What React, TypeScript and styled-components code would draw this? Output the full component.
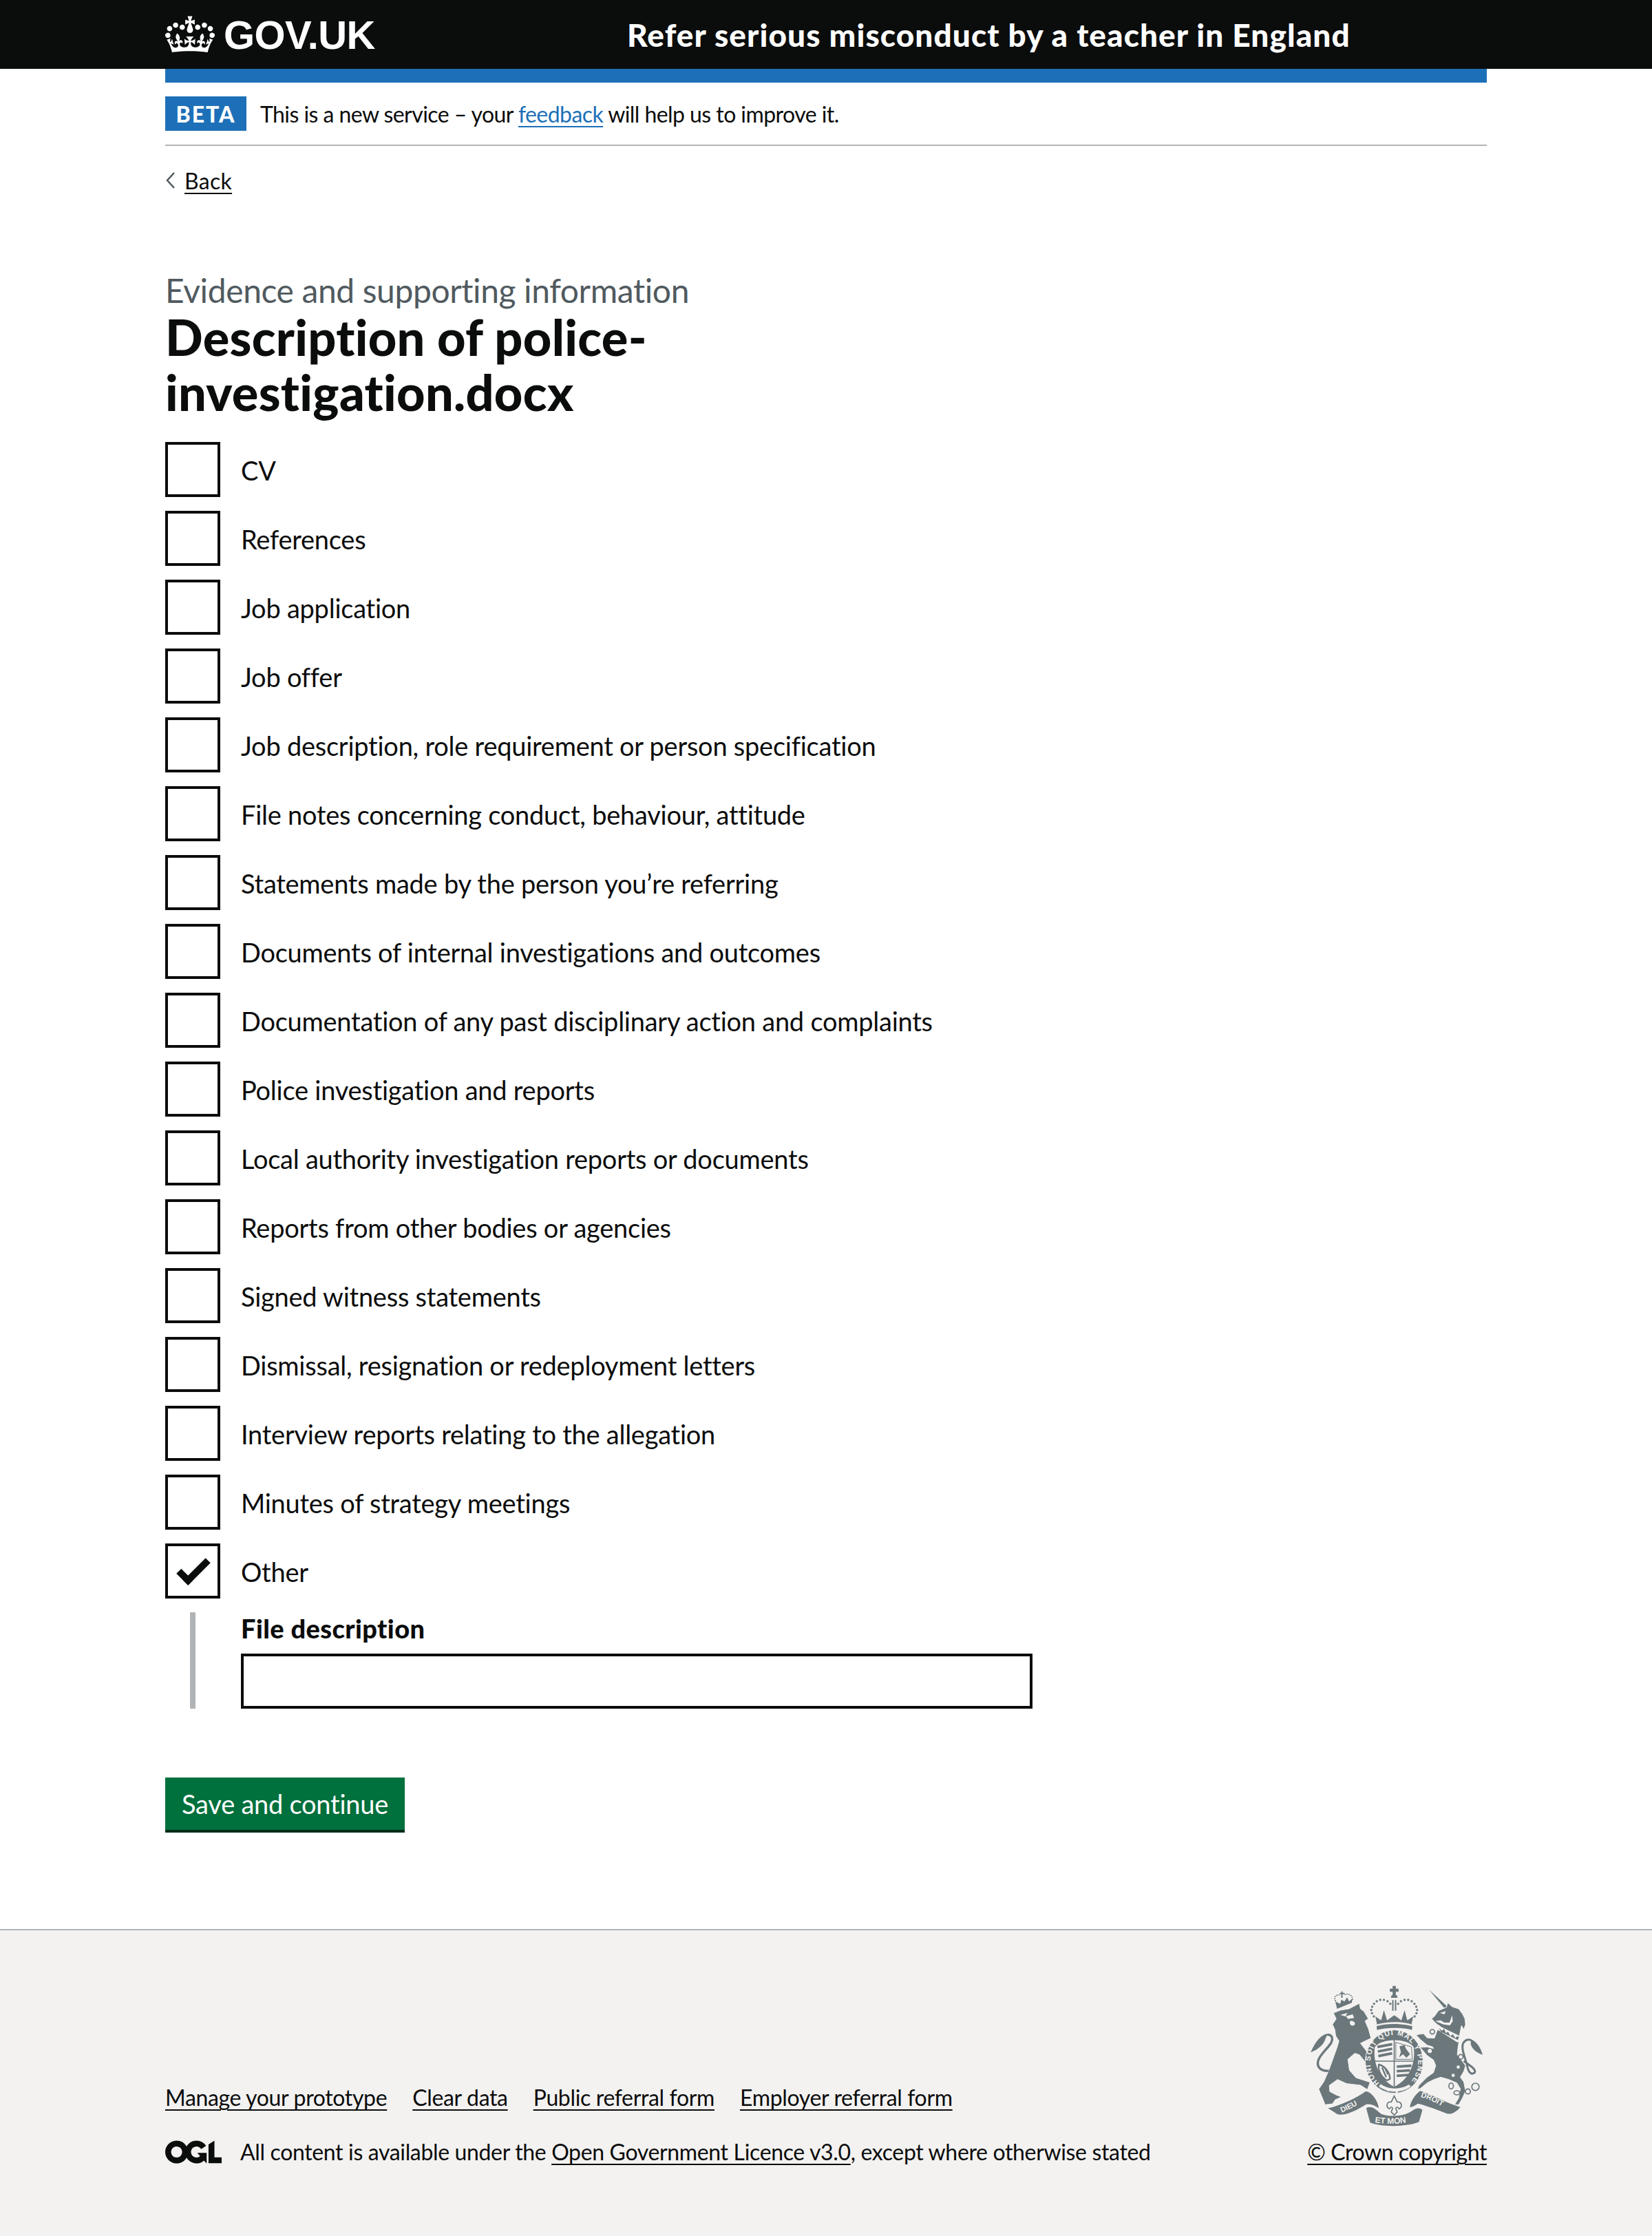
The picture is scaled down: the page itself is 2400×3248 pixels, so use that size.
import React from 'react';
import styled, { createGlobalStyle } from 'styled-components';

const GlobalStyle = createGlobalStyle`
    html, body {
        margin: 0;
        padding: 0;
        background: #fff;
    }
    body {
        font-family: "Lato", "Noto Sans", Arial, sans-serif;
        color: #0b0c0c;
    }
`;

const Page = styled.div`
    display: flex;
    flex-direction: column;
    min-height: 3248px;
`;

const Width = styled.div`
    width: 1920px;
    margin: 0 auto;
`;

const Header = styled.header`
    background: #0b0c0c;
    height: 100px;
`;

const HeaderInner = styled(Width)`
    display: flex;
    align-items: center;
    height: 100px;
`;

const Logo = styled.a`
    display: flex;
    align-items: center;
    width: 671px;
    color: #fff;
    font-family: "Liberation Sans", Arial, sans-serif;
    font-weight: 700;
    font-size: 58px;
    letter-spacing: -0.6px;
    svg {
        width: 72px;
        height: 54px;
        margin-right: 13px;
    }
`;

const ServiceName = styled.span`
    color: #fff;
    font-size: 46px;
    font-weight: 900;
    letter-spacing: 1.05px;
`;

const BlueBar = styled(Width)`
    height: 20px;
    background: #1d70b8;
`;

const PhaseBanner = styled(Width)`
    display: flex;
    align-items: center;
    padding: 20px 0;
    border-bottom: 2px solid #b1b4b6;
`;

const PhaseTag = styled.strong`
    display: flex;
    align-items: center;
    justify-content: center;
    width: 118px;
    height: 50px;
    margin-right: 20px;
    background: #1d70b8;
    color: #fff;
    font-size: 32px;
    font-weight: 900;
    letter-spacing: 2px;
`;

const PhaseText = styled.span`
    font-size: 32px;
    letter-spacing: -0.56px;
`;

const BlueLink = styled.a`
    color: #1d70b8;
    text-decoration: underline;
    text-decoration-thickness: 2px;
    text-underline-offset: 5px;
`;

const BackLink = styled.a`
    display: flex;
    align-items: center;
    height: 40px;
    margin-top: 30px;
    font-size: 32px;
    letter-spacing: 0.3px;
    span {
        text-decoration: underline;
        text-decoration-thickness: 2px;
        text-underline-offset: 5px;
    }
    svg {
        width: 16px;
        height: 28px;
        margin-right: 12px;
    }
`;

const Main = styled(Width)`
    padding-top: 110px;
    padding-bottom: 140px;
`;

const Caption = styled.div`
    font-size: 48px;
    line-height: 60px;
    color: #505a5f;
    letter-spacing: -0.4px;
`;

const Heading = styled.h1`
    width: 900px;
    margin: -3px 0 33px;
    font-size: 72px;
    line-height: 80px;
    font-weight: 900;
    letter-spacing: 0.3px;
`;

const Row = styled.label`
    display: flex;
    align-items: center;
    height: 80px;
    margin-bottom: 20px;
`;

const Box = styled.span<{ $checked?: boolean }>`
    position: relative;
    box-sizing: border-box;
    flex: 0 0 80px;
    height: 80px;
    border: 4px solid #0b0c0c;
    background: #fff;
    &::after {
        content: '';
        display: ${(p) => (p.$checked ? 'block' : 'none')};
        position: absolute;
        top: 20px;
        left: 14px;
        width: 46px;
        height: 24px;
        border: solid #0b0c0c;
        border-width: 0 0 10px 10px;
        transform: rotate(-45deg);
        box-sizing: border-box;
        border-top-color: transparent;
    }
`;

const RowText = styled.span`
    padding-left: 30px;
    padding-top: 2px;
    font-size: 38px;
    letter-spacing: -0.25px;
`;

const Conditional = styled.div`
    margin-left: 36px;
    padding-left: 66px;
    border-left: 8px solid #b1b4b6;
`;

const FieldLabel = styled.label`
    display: block;
    height: 50px;
    margin-bottom: 10px;
    font-size: 38px;
    line-height: 46px;
    font-weight: 900;
    letter-spacing: 0.4px;
`;

const TextInput = styled.input`
    display: block;
    box-sizing: border-box;
    width: 1150px;
    height: 80px;
    border: 4px solid #0b0c0c;
    border-radius: 0;
    background: #fff;
    outline: none;
`;

const SaveButton = styled.button`
    display: block;
    box-sizing: border-box;
    width: 348px;
    height: 76px;
    margin-top: 100px;
    margin-bottom: 4px;
    padding: 0;
    border: 0;
    background: #00703c;
    box-shadow: 0 4px 0 #002d18;
    color: #fff;
    font-family: inherit;
    font-size: 38px;
    letter-spacing: -0.25px;
`;

const Footer = styled.footer`
    flex: 1;
    box-sizing: border-box;
    padding-top: 80px;
    background: #f3f2f1;
    border-top: 2px solid #b1b4b6;
`;

const FooterInner = styled(Width)`
    display: flex;
    justify-content: space-between;
    align-items: flex-end;
`;

const FooterLeft = styled.div`
    display: flex;
    flex-direction: column;
`;

const FooterLinks = styled.div`
    display: flex;
    gap: 37px;
    margin-bottom: 39px;
    font-size: 32px;
    line-height: 40px;
    letter-spacing: -0.35px;
`;

const FooterLink = styled.a`
    color: #0b0c0c;
    text-decoration: underline;
    text-decoration-thickness: 2px;
    text-underline-offset: 5px;
`;

const Licence = styled.div`
    display: flex;
    align-items: center;
    font-size: 32px;
    line-height: 40px;
    letter-spacing: -0.35px;
    svg {
        width: 82px;
        height: 34px;
        margin-right: 27px;
    }
`;

const FooterRight = styled.div`
    display: flex;
    flex-direction: column;
    align-items: flex-end;
    font-size: 32px;
    line-height: 40px;
    letter-spacing: -0.45px;
    svg {
        width: 252px;
        height: 205px;
        margin-right: 5px;
        margin-bottom: 17px;
    }
`;

const labels = [
    'CV',
    'References',
    'Job application',
    'Job offer',
    'Job description, role requirement or person specification',
    'File notes concerning conduct, behaviour, attitude',
    'Statements made by the person you’re referring',
    'Documents of internal investigations and outcomes',
    'Documentation of any past disciplinary action and complaints',
    'Police investigation and reports',
    'Local authority investigation reports or documents',
    'Reports from other bodies or agencies',
    'Signed witness statements',
    'Dismissal, resignation or redeployment letters',
    'Interview reports relating to the allegation',
    'Minutes of strategy meetings',
];

const footerLinks = ['Manage your prototype', 'Clear data', 'Public referral form', 'Employer referral form'];

const CrownIcon = () => (
    <svg viewBox="0 0 132 97" aria-hidden="true">
        <path
            fill="currentColor"
            fillRule="evenodd"
            d="M25 30.2c3.5 1.5 7.7-.2 9.1-3.7 1.5-3.6-.2-7.8-3.9-9.2-3.6-1.4-7.6.3-9.1 3.9-1.4 3.5.3 7.5 3.9 9zM9 39.5c3.6 1.5 7.8-.2 9.2-3.7 1.5-3.6-.2-7.8-3.9-9.1-3.6-1.5-7.6.2-9.1 3.8-1.4 3.5.3 7.5 3.8 9zM4.4 57.2c3.5 1.5 7.7-.2 9.1-3.8 1.5-3.6-.2-7.7-3.9-9.1-3.5-1.5-7.6.3-9.1 3.8-1.4 3.5.3 7.6 3.9 9.1zm38.3-21.4c3.5 1.5 7.7-.2 9.1-3.8 1.5-3.6-.2-7.7-3.9-9.1-3.6-1.5-7.6.3-9.1 3.8-1.3 3.6.4 7.7 3.9 9.1zm64.4-5.6c-3.6 1.5-7.8-.2-9.1-3.7-1.5-3.6.2-7.8 3.8-9.2 3.6-1.4 7.7.3 9.2 3.9 1.3 3.5-.4 7.5-3.9 9zm15.9 9.3c-3.6 1.5-7.7-.2-9.1-3.7-1.5-3.6.2-7.8 3.7-9.1 3.6-1.5 7.7.2 9.2 3.8 1.5 3.5-.3 7.5-3.8 9zm4.7 17.7c-3.6 1.5-7.8-.2-9.2-3.8-1.5-3.6.2-7.7 3.9-9.1 3.6-1.5 7.7.3 9.2 3.8 1.3 3.5-.4 7.6-3.9 9.1zM89.3 35.8c-3.6 1.5-7.8-.2-9.2-3.8-1.4-3.6.2-7.7 3.9-9.1 3.6-1.5 7.7.3 9.2 3.8 1.4 3.6-.3 7.7-3.9 9.1zM69.7 17.7l8.9 4.7V9.3l-8.9 2.8c-.2-.3-.5-.6-.9-.9L72.4 0H59.6l3.5 11.2c-.3.3-.6.5-.9.9l-8.8-2.8v13.1l8.8-4.7c.3.3.6.7.9.9l-5 15.4v.1c-.2.8-.4 1.6-.4 2.4 0 4.1 3.1 7.5 7 8.1h.2c.3 0 .7.1 1 .1.4 0 .7 0 1-.1h.2c4-.6 7.1-4.1 7.1-8.1 0-.8-.1-1.7-.4-2.4V34l-5.1-15.4c.4-.2.7-.6 1-.9zM66 92.8c16.9 0 32.8 1.1 47.1 3.2 4-16.9 8.9-26.7 14-33.5l-9.6-3.4c1 4.9 1.1 7.2 0 10.2-1.5-1.4-3-4.3-4.2-8.7L108.6 76c2.8-2 5-3.2 7.5-3.3-4.4 9.4-10 11.9-13.6 11.2-4.3-.8-6.3-4.6-5.6-7.9 1-4.7 5.7-5.9 8-.5 4.3-8.7-3-11.4-7.6-8.8 7.1-7.2 7.9-13.5 2.1-21.1-8 6.1-8.1 12.3-4.5 20.8-4.7-5.4-12.1-2.5-9.5 6.2 3.4-5.2 7.9-2 7.2 3.1-.6 4.3-6.4 7.8-13.5 7.2-10.3-.9-10.9-8-11.2-13.8 2.5-.5 7.1 1.8 11 7.3L80.2 60c-4.1 4.4-8 5.3-12.3 5.4 1.4-4.4 8-11.6 8-11.6H55.5s6.4 7.2 7.9 11.6c-4.2-.1-8-1-12.3-5.4l1.4 16.4c3.9-5.5 8.5-7.7 10.9-7.3-.3 5.8-.9 12.8-11.1 13.8-7.2.6-12.9-2.9-13.5-7.2-.7-5 3.8-8.3 7.1-3.1 2.7-8.7-4.6-11.6-9.4-6.2 3.7-8.5 3.6-14.7-4.6-20.8-5.8 7.6-5 13.9 2.2 21.1-4.7-2.6-11.9.1-7.7 8.8 2.3-5.5 7.1-4.2 8.1.5.7 3.3-1.3 7.1-5.7 7.9-3.5.7-9-1.8-13.5-11.2 2.5.1 4.7 1.3 7.5 3.3l-4.7-15.4c-1.2 4.4-2.7 7.2-4.3 8.7-1.1-3-.9-5.3 0-10.2l-9.5 3.4c5 6.9 9.9 16.7 14 33.5 14.8-2.1 30.8-3.2 47.7-3.2z"
        />
    </svg>
);

const OglLogo = () => (
    <svg viewBox="0 0 483.2 195.7" aria-hidden="true">
        <path
            fill="currentColor"
            d="M421.5 142.8V.1l-50.7 32.3v161.1h112.4v-50.7zm-122.3-9.6A47.12 47.12 0 0 1 221 97.8c0-26 21.1-47.1 47.1-47.1 16.7 0 31.4 8.7 39.7 21.8l42.7-27.2A97.63 97.63 0 0 0 268.1 0c-36.5 0-68.3 20.1-85.1 49.7A98 98 0 0 0 97.8 0C43.9 0 0 43.9 0 97.8s43.9 97.8 97.8 97.8c36.5 0 68.3-20.1 85.1-49.7a97.76 97.76 0 0 0 149.6 25.4l19.4 22.2h3v-87.8h-80l24.3 27.5zM97.8 145c-26 0-47.1-21.1-47.1-47.1s21.1-47.1 47.1-47.1 47.2 21 47.2 47S123.8 145 97.8 145"
        />
    </svg>
);

// royal arms, drawn by hand; the coordinates are those of a 3x crop of the footer
const CREST = '#6b777b';
const BG = '#f3f2f1';
const crownBeads = [
    [480, 150], [468, 139], [452, 133], [436, 133], [421, 139], [409, 150], [401, 163], [397, 177], [400, 191], [408, 205],
];
const stripes = [0, 1, 2];

const Crest = () => (
    <svg viewBox="130 70 755 615" aria-hidden="true">
        <defs>
            <path id="garter" d="M432,496 A104,118 0 1 1 562,496" />
            <path id="scrollLeft" d="M268,624 Q325,600 378,566" />
            <path id="scrollMid" d="M412,668 Q495,680 582,662" />
            <path id="scrollRight" d="M612,556 Q680,575 738,622" />
        </defs>
        {/* motto scroll */}
        <path fill={CREST} d="M208,605 C240,600 320,570 372,532 C395,530 425,570 430,605 C410,592 395,585 375,588 C340,610 285,640 250,632 Z" />
        <path fill={CREST} d="M375,605 C400,590 420,615 440,630 C480,645 540,640 570,620 C590,605 605,600 620,612 L605,665 C560,685 450,690 392,668 Z" />
        <path fill={CREST} d="M565,600 C570,570 590,545 610,530 C660,545 730,585 785,600 C770,620 745,635 725,628 C680,610 625,590 600,585 C585,595 575,600 565,600 Z" />
        <path
            fill={BG}
            stroke={CREST}
            strokeWidth="5"
            d="M497,552 L510,578 C530,575 535,600 518,608 C512,598 506,598 504,606 L510,622 L497,634 L484,622 L490,606 C488,598 482,598 476,608 C459,600 464,575 484,578 Z"
        />
        <text fill={BG} fontFamily="Liberation Sans, sans-serif" fontWeight="700" fontSize="33">
            <textPath href="#scrollLeft">DIEU</textPath>
        </text>
        <text fill={BG} fontFamily="Liberation Sans, sans-serif" fontWeight="700" fontSize="36">
            <textPath href="#scrollMid">ET MON</textPath>
        </text>
        <text fill={BG} fontFamily="Liberation Sans, sans-serif" fontWeight="700" fontSize="33">
            <textPath href="#scrollRight">DROIT</textPath>
        </text>
        {/* lion */}
        <path
            fill={CREST}
            stroke={BG}
            strokeWidth="3"
            d="M232,190 L262,178 L300,172 L345,148 L350,172 L365,183 L384,215 L370,225 L385,260 L396,300 L350,322 L388,372 L408,408 L400,452 L382,440 L372,405 L345,372 L325,366 L295,392 L302,440 L330,472 L392,492 L380,524 L350,505 L290,498 L250,480 L214,506 L216,532 L245,548 L268,556 L240,568 L228,586 L196,590 L168,522 L190,490 L212,440 L248,340 L256,312 L242,290 L238,262 L228,240 L244,216 Z"
        />
        <path fill="none" stroke={CREST} strokeWidth="10" d="M212,442 C185,445 158,432 165,400 C172,370 208,345 222,320 C232,300 225,283 205,285" />
        <path fill={CREST} d="M208,280 C175,285 150,320 133,362 C165,348 190,330 198,300 Z" />
        <path fill={BG} d="M262,198 L294,190 L284,205 Z M286,204 L316,196 L322,212 L296,216 Z M304,226 C310,222 326,226 326,238 C324,248 308,248 304,238 Z" />
        {/* lion crown */}
        <path fill={CREST} d="M248,172 L312,146 L316,126 L300,140 L292,122 L280,140 L266,132 L262,150 L240,140 Z" />
        <path fill={CREST} d="M260,102 H266 V96 H272 V102 H280 V108 H272 V124 H266 V108 H260 Z" />
        <path fill="none" stroke={CREST} strokeWidth="5" strokeDasharray="5 4" d="M242,138 C228,118 252,108 262,112 M280,110 C296,104 320,112 314,136" />
        {/* royal crown */}
        <path fill={CREST} d="M490,72 H504 V84 H516 V98 H504 V112 H490 V98 H478 V84 H490 Z" />
        <path fill={CREST} d="M486,112 H508 L512,124 H482 Z M488,134 H494 V180 H488 Z M500,134 H506 V180 H500 Z" />
        {crownBeads.map(([x, y]) => (
            <React.Fragment key={x}>
                <circle cx={x} cy={y} r="5" fill={CREST} />
                <circle cx={994 - x} cy={y} r="5" fill={CREST} />
            </React.Fragment>
        ))}
        <path
            fill={CREST}
            d="M415,205 L440,222 L452,178 L466,222 L497,200 L528,222 L542,178 L554,222 L580,205 L572,240 C530,226 464,226 422,240 Z"
        />
        <path fill={CREST} d="M420,248 C465,235 530,235 576,248 L574,264 C530,252 465,252 422,264 Z" />
        {/* garter */}
        <ellipse cx="497" cy="402" rx="126" ry="138" fill={CREST} stroke={BG} strokeWidth="3" />
        <path fill={BG} d="M412,340 C440,298 555,298 582,340 C590,400 570,475 497,512 C425,475 405,400 412,340 Z" />
        <path fill="none" stroke={CREST} strokeWidth="5" d="M497,302 V512 M408,400 H586" />
        <path fill="none" stroke={CREST} strokeWidth="3" d="M504,318 L572,338 L576,392 H504 Z" />
        {stripes.map((i) => (
            <React.Fragment key={i}>
                <path fill="none" stroke={CREST} strokeWidth="11" d={`M${424 + i * 2},${338 + i * 20} L${488},${326 + i * 20}`} />
                <path fill="none" stroke={CREST} strokeWidth="11" d={`M${508},${424 + i * 20} L${572 - i * 6},${420 + i * 20}`} />
            </React.Fragment>
        ))}
        <path fill={CREST} d="M520,335 L542,330 L548,345 L566,370 L550,385 L535,370 L518,384 L526,360 Z" />
        <path fill="none" stroke={CREST} strokeWidth="7" d="M430,415 C455,420 480,450 478,478 L465,484 C440,470 425,440 430,415 Z M444,428 L462,470 M456,428 L470,458" />
        <path fill={BG} d="M430,510 C470,540 530,540 570,510 L560,502 C525,525 470,525 438,500 Z" />
        <circle cx="472" cy="526" r="6" fill={BG} />
        <circle cx="508" cy="532" r="6" fill={BG} />
        <text fill={BG} fontFamily="Liberation Sans, sans-serif" fontWeight="700" fontSize="32">
            <textPath href="#garter" textLength="540" lengthAdjust="spacing">HONI SOIT QUI MAL Y PENSE</textPath>
        </text>
        {/* unicorn */}
        <path fill={CREST} d="M648,88 L726,160 L718,172 Z" />
        <path
            fill={CREST}
            stroke={BG}
            strokeWidth="3"
            d="M660,215 L672,205 L690,180 L725,165 L730,145 L750,163 L778,172 L795,195 L805,215 L808,240 L800,262 L790,245 L782,285 L780,310 L775,340 L772,372 L790,395 L808,420 L800,445 L785,470 L800,490 L808,530 L795,560 L778,590 L760,590 L778,560 L785,520 L770,495 L735,480 L700,470 L670,480 L640,495 L610,520 L598,522 L605,505 L640,470 L668,450 L678,420 L668,395 L640,375 L610,340 L640,338 L668,345 L665,338 L640,330 L610,305 L592,285 L625,280 L640,298 L672,300 L685,265 L700,250 L685,240 L675,232 Z"
        />
        <path fill={BG} d="M696,190 L722,182 L716,196 Z M676,225 L700,222 L715,232 L738,232 L750,200 L752,226 L740,244 L712,240 Z" />
        <path fill={BG} d="M684,262 L696,248 L786,292 L780,316 L772,318 Z" />
        <path fill={CREST} d="M692,256 L700,272 L774,308 L780,294 L770,292 L764,300 L752,282 L742,292 L732,272 L722,278 L714,258 L706,268 Z" />
        <circle cx="663" cy="272" r="10" fill={BG} stroke={CREST} strokeWidth="5" />
        <circle cx="652" cy="356" r="9" fill={BG} />
        <circle cx="787" cy="381" r="10" fill={BG} stroke={CREST} strokeWidth="5" />
        <circle cx="776" cy="426" r="7" fill={BG} />
        <circle cx="754" cy="462" r="7" fill={BG} />
        <path fill="none" stroke={CREST} strokeWidth="9" d="M800,400 C830,420 860,440 845,452 C832,460 820,448 815,420 C805,380 785,340 800,318 C815,300 835,305 840,320" />
        <path fill={CREST} d="M832,305 C860,318 875,345 882,372 C855,362 838,350 830,325 Z" />
        <g fill="none" stroke={CREST} strokeWidth="5">
            <ellipse cx="745" cy="508" rx="10" ry="13" />
            <ellipse cx="770" cy="538" rx="13" ry="9" />
            <circle cx="818" cy="532" r="11" />
            <circle cx="851" cy="512" r="16" />
        </g>
    </svg>
);

const App = () => (
    <Page>
        <GlobalStyle />
        <Header>
            <HeaderInner>
                <Logo>
                    <CrownIcon />
                    GOV.UK
                </Logo>
                <ServiceName>Refer serious misconduct by a teacher in England</ServiceName>
            </HeaderInner>
        </Header>
        <BlueBar />
        <PhaseBanner>
            <PhaseTag>BETA</PhaseTag>
            <PhaseText>
                This is a new service – your <BlueLink>feedback</BlueLink> will help us to improve it.
            </PhaseText>
        </PhaseBanner>
        <Width>
            <BackLink>
                <svg viewBox="0 0 16 28" aria-hidden="true">
                    <path d="M13 3 L3 14 L13 25" fill="none" stroke="#505a5f" strokeWidth="2.5" />
                </svg>
                <span>Back</span>
            </BackLink>
        </Width>
        <Main>
            <Caption>Evidence and supporting information</Caption>
            <Heading>Description of police-investigation.docx</Heading>
            {labels.map((label) => (
                <Row key={label}>
                    <Box />
                    <RowText>{label}</RowText>
                </Row>
            ))}
            <Row>
                <Box $checked />
                <RowText>Other</RowText>
            </Row>
            <Conditional>
                <FieldLabel>File description</FieldLabel>
                <TextInput type="text" />
            </Conditional>
            <SaveButton>Save and continue</SaveButton>
        </Main>
        <Footer>
            <FooterInner>
                <FooterLeft>
                    <FooterLinks>
                        {footerLinks.map((link) => (
                            <FooterLink key={link}>{link}</FooterLink>
                        ))}
                    </FooterLinks>
                    <Licence>
                        <OglLogo />
                        <span>
                            All content is available under the <FooterLink>Open Government Licence v3.0</FooterLink>, except where otherwise stated
                        </span>
                    </Licence>
                </FooterLeft>
                <FooterRight>
                    <Crest />
                    <FooterLink>© Crown copyright</FooterLink>
                </FooterRight>
            </FooterInner>
        </Footer>
    </Page>
);

export default App;
